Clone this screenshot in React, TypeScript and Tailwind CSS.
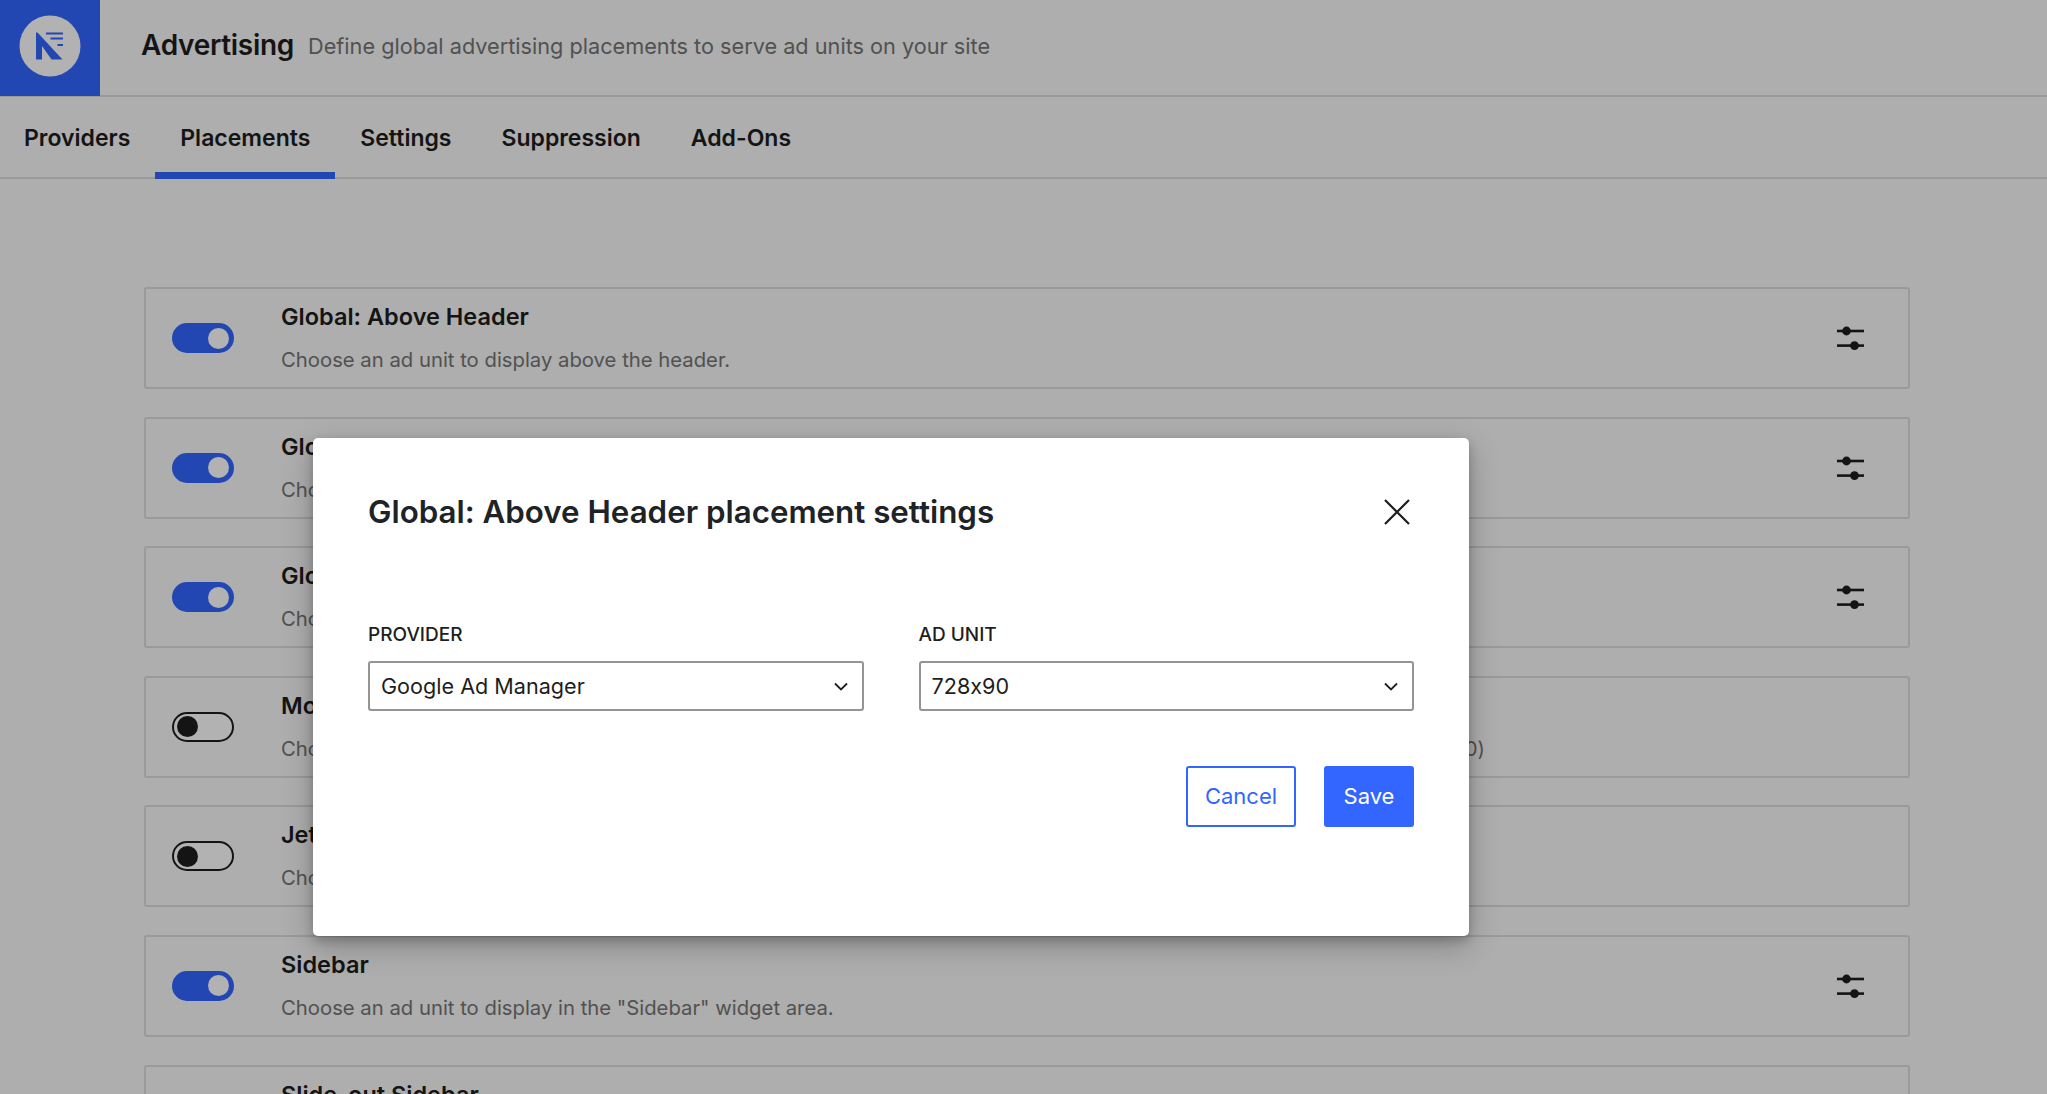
import { useState } from "react";

const tabs = ["Providers", "Placements", "Settings", "Suppression", "Add-Ons"];

const placements = [
  { title: "Global: Above Header", description: "Choose an ad unit to display above the header.", on: true },
  { title: "Global: Below Header", description: "Choose an ad unit to display below the header.", on: true },
  { title: "Global: Above Footer", description: "Choose an ad unit to display above the footer.", on: true },
  {
    title: "Mobile Sticky Footer",
    description:
      "Choose an ad unit to display at the bottom of the screen on mobile devices (recommended size: 320x50, 300x50 or 320x100)",
    on: false,
  },
  { title: "Jetpack Infinite Scroll", description: "Choose an ad unit to display between posts on scroll.", on: false },
  { title: "Sidebar", description: 'Choose an ad unit to display in the "Sidebar" widget area.', on: true },
  { title: "Slide-out Sidebar", description: "Choose an ad unit to display in the slide-out sidebar.", on: true },
];

function Logo() {
  return (
    <div className="flex h-[96px] w-[100px] shrink-0 items-center justify-center self-start bg-[#3366ff] pb-[4px]">
      <svg viewBox="0 0 62 62" className="h-[62px] w-[62px]">
        <circle cx="31" cy="31" r="30.5" fill="#ffffff" />
        <path d="M17 17.5h1.5L43.5 44.5H32.5L23 31v13.500H17z" fill="#3366ff" />
        <path d="M27 17.500h17v2H27zM31.500 22.500H44v2H31.500zM38.500 29H44v2h-5.500z" fill="#3366ff" />
      </svg>
    </div>
  );
}

function Toggle({ on }: { on: boolean }) {
  if (on) {
    return (
      <span className="flex h-[30px] w-[62px] shrink-0 items-center justify-end rounded-full bg-[#3366ff] pr-[5px]">
        <span className="h-[21px] w-[21px] rounded-full bg-white" />
      </span>
    );
  }
  return (
    <span className="flex h-[30px] w-[62px] shrink-0 items-center rounded-full border-2 border-[#1e1e1e] bg-white pl-[3px]">
      <span className="h-[21px] w-[21px] rounded-full bg-[#1e1e1e]" />
    </span>
  );
}

function SlidersIcon() {
  return (
    <svg viewBox="0 0 27 24" className="h-[24px] w-[27px] shrink-0" fill="#1e1e1e">
      <rect x="0" y="3.700" width="27" height="2.600" />
      <circle cx="9.500" cy="5" r="4.400" />
      <rect x="0" y="18.300" width="27" height="2.600" />
      <circle cx="17.500" cy="19.600" r="4.400" />
    </svg>
  );
}

function PlacementCard({ title, description, on }: { title: string; description: string; on: boolean }) {
  return (
    <div className="flex h-[102px] items-center rounded-[3px] border-2 border-[#dddddd] pl-[26px] pr-[44px]">
      <Toggle on={on} />
      <div className="ml-[47px] min-w-0 flex-1 pt-[1px]">
        <h3 className="text-[23.500px] font-semibold leading-[30px] text-[#1e1e1e]">{title}</h3>
        <p className="mt-[13px] text-[20.300px] leading-[30px] text-[#757575]">{description}</p>
      </div>
      {/* only active placements can be configured */}
      {on && <SlidersIcon />}
    </div>
  );
}

function SelectField({ label, value }: { label: string; value: string }) {
  return (
    <div className="min-w-0 flex-1">
      <div className="text-[19px] font-medium uppercase leading-[24px] text-[#1e1e1e]">{label}</div>
      <div className="mt-[14px] flex h-[50px] items-center justify-between rounded-[3px] border-2 border-[#949494] bg-white pl-[11px] pr-[14px]">
        <span className="text-[21.600px] text-[#1e1e1e]">{value}</span>
        <svg viewBox="0 0 14 9" className="h-[9px] w-[14px]" fill="none" stroke="#1e1e1e" strokeWidth="1.800">
          <path d="M1 1.500l6 6 6-6" />
        </svg>
      </div>
    </div>
  );
}

function PlacementModal() {
  return (
    <div className="absolute left-[313px] top-[438px] h-[498px] w-[1156px] rounded-[5px] bg-white px-[55px] pt-[52px] shadow-[0_4px_10px_rgba(0,0,0,0.2),0_10px_30px_rgba(0,0,0,0.25)]">
      <div className="flex h-[44px] items-center justify-between">
        <h2 className="text-[31.300px] font-semibold text-[#1e2327]">Global: Above Header placement settings</h2>
        <svg viewBox="0 0 26 26" className="h-[26px] w-[26px] shrink-0 -translate-x-[4px]" stroke="#1e1e1e" strokeWidth="2.200">
          <path d="M1 1l24 24M25 1L1 25" />
        </svg>
      </div>
      <div className="mt-[89px] flex gap-[55px]">
        <SelectField label="Provider" value="Google Ad Manager" />
        <SelectField label="Ad Unit" value="728x90" />
      </div>
      <div className="mt-[55px] flex justify-end gap-[28px]">
        <button className="h-[61px] w-[110px] rounded-[3px] border-2 border-[#3366ff] bg-white text-[22px] text-[#3366ff]">
          Cancel
        </button>
        <button className="h-[61px] w-[90px] rounded-[3px] bg-[#3366ff] text-[22px] text-white">Save</button>
      </div>
    </div>
  );
}

export default function App() {
  const [activeTab] = useState("Placements");

  return (
    <div className="relative h-screen overflow-hidden bg-[#f9f9f9] font-['Inter',sans-serif] [font-feature-settings:'calt'_0]">
      <header className="flex h-[97px] items-center border-b-2 border-[#dddddd]">
        <Logo />
        <h1 className="ml-[41px] pb-[5px] text-[28px] font-semibold tracking-[-0.3px] text-[#1e1e1e]">Advertising</h1>
        <p className="ml-[14px] pb-[3px] text-[21.700px] text-[#757575]">
          Define global advertising placements to serve ad units on your site
        </p>
      </header>

      <nav className="flex h-[82px] border-b-2 border-[#dddddd]">
        {tabs.map((tab) => (
          <div
            key={tab}
            className={`-mb-[2px] flex items-center px-[25px] text-[23px] font-semibold text-[#1e1e1e] first:-ml-[1px] ${
              tab === activeTab ? "border-b-[7px] border-[#3366ff] pt-[7px]" : ""
            }`}
          >
            {tab}
          </div>
        ))}
      </nav>

      <main className="ml-[144px] flex w-[1766px] flex-col gap-[27.600px] pt-[108px]">
        {placements.map((placement) => (
          <PlacementCard key={placement.title} {...placement} />
        ))}
      </main>

      <div className="absolute inset-0 bg-black/30" />
      <PlacementModal />
    </div>
  );
}
